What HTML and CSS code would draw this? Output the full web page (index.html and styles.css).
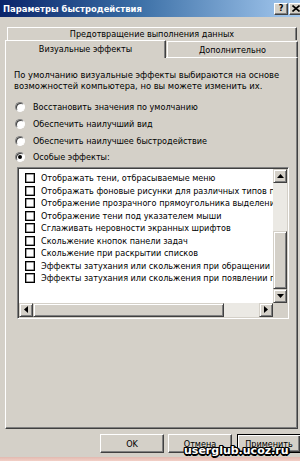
FILE: index.html
```html
<!DOCTYPE html>
<html lang="ru">
<head>
<meta charset="utf-8">
<title>Параметры быстродействия</title>
<link rel="stylesheet" href="styles.css">
</head>
<body>
<div class="window">
  <div class="titlebar">
    <span class="title">Параметры быстродействия</span>
    <div class="tb-btns">
      <span class="tb-btn">?</span>
      <span class="tb-btn x">
        <svg width="8" height="7" viewBox="0 0 8 7"><path d="M0.5 0.5 L7.5 6.5 M7.5 0.5 L0.5 6.5" stroke="#000" stroke-width="1.6"/></svg>
      </span>
    </div>
  </div>

  <div class="tabs">
    <div class="tabrow back">
      <div class="tab wide">Предотвращение выполнения данных</div>
    </div>
    <div class="tabrow front">
      <div class="tab sel">Визуальные эффекты</div>
      <div class="tab other">Дополнительно</div>
    </div>
  </div>

  <div class="panel">
    <p class="desc">По умолчанию визуальные эффекты выбираются на основе<br>возможностей компьютера, но вы можете изменить их.</p>
    <div class="radios">
      <div class="radio-row"><span class="radio"></span><span>Восстановить значения по умолчанию</span></div>
      <div class="radio-row"><span class="radio"></span><span>Обеспечить наилучший вид</span></div>
      <div class="radio-row"><span class="radio"></span><span>Обеспечить наилучшее быстродействие</span></div>
      <div class="radio-row"><span class="radio on"></span><span>Особые эффекты:</span></div>
    </div>
    <div class="listbox">
      <div class="list-main">
        <div class="items">
          <div class="item"><span class="cb"></span><span>Отображать тени, отбрасываемые меню</span></div>
          <div class="item"><span class="cb"></span><span>Отображать фоновые рисунки для различных типов папок</span></div>
          <div class="item"><span class="cb"></span><span>Отображение прозрачного прямоугольника выделения</span></div>
          <div class="item"><span class="cb"></span><span>Отображение тени под указателем мыши</span></div>
          <div class="item"><span class="cb"></span><span>Сглаживать неровности экранных шрифтов</span></div>
          <div class="item"><span class="cb"></span><span>Скольжение кнопок панели задач</span></div>
          <div class="item"><span class="cb"></span><span>Скольжение при раскрытии списков</span></div>
          <div class="item"><span class="cb"></span><span>Эффекты затухания или скольжения при обращении к меню</span></div>
          <div class="item"><span class="cb"></span><span>Эффекты затухания или скольжения при появлении подсказок</span></div>
        </div>
        <div class="vscroll">
          <span class="sbtn"><svg width="7" height="4" viewBox="0 0 7 4"><path d="M3.5 0 L7 4 L0 4 Z" fill="#000"/></svg></span>
          <span class="track vtrack"></span>
          <span class="thumb vthumb"></span>
          <span class="sbtn"><svg width="7" height="4" viewBox="0 0 7 4"><path d="M0 0 L7 0 L3.5 4 Z" fill="#000"/></svg></span>
        </div>
      </div>
      <div class="hscroll">
        <span class="sbtn"><svg width="4" height="7" viewBox="0 0 4 7"><path d="M0 3.5 L4 0 L4 7 Z" fill="#000"/></svg></span>
        <span class="thumb hthumb"></span>
        <span class="track htrack"></span>
        <span class="sbtn"><svg width="4" height="7" viewBox="0 0 4 7"><path d="M0 0 L4 3.5 L0 7 Z" fill="#000"/></svg></span>
        <span class="corner"></span>
      </div>
    </div>
  </div>

  <div class="buttons">
    <span class="btn">OK</span>
    <span class="btn">Отмена</span>
    <span class="btn def">Применить</span>
  </div>
  <div class="bottom-edge"></div>
  <div class="watermark">userglub.ucoz.ru</div>
</div>
</body>
</html>
```

FILE: styles.css
```css
* { box-sizing: border-box; }
html, body {
  margin: 0;
  padding: 0;
  width: 300px;
  height: 461px;
  overflow: hidden;
  background: #d4d0c8;
}
.window {
  position: relative;
  width: 300px;
  height: 461px;
  overflow: hidden;
  font-family: "DejaVu Sans Condensed", "DejaVu Sans", sans-serif;
  font-size: 9px;
  color: #000;
  background: #d4d0c8;
}
.titlebar {
  height: 17px;
  display: flex;
  align-items: center;
  padding-left: 3px;
  background: linear-gradient(to right, #0a246a 0%, #3a6ea5 45%, #a6caf0 100%);
}
.title {
  color: #fff;
  font-weight: bold;
  font-size: 9.4px;
  flex: 1;
  white-space: nowrap;
}
.tb-btns {
  display: flex;
  gap: 1px;
  margin-right: -3px;
}
.tb-btn {
  width: 14px;
  height: 12px;
  display: flex;
  align-items: center;
  justify-content: center;
  background: #d4d0c8;
  border: 1px solid;
  border-color: #fff #404040 #404040 #fff;
  box-shadow: inset -1px -1px #808080;
  font-weight: bold;
  font-size: 9px;
  line-height: 1;
}
.tabs {
  margin-top: 10px;
}
.tabrow {
  display: flex;
}
.tabrow.back {
  padding-left: 7px;
  height: 13px;
}
.tab {
  display: flex;
  align-items: center;
  justify-content: center;
  white-space: nowrap;
  background: #d4d0c8;
  border-top: 1px solid #fff;
  border-left: 1px solid #fff;
  border-right: 1px solid #404040;
  box-shadow: inset -1px 0 #808080;
}
.tab.wide {
  width: 290px;
  height: 13px;
}
.tabrow.front {
  height: 17px;
  padding-left: 5px;
  align-items: flex-end;
}
.tab.sel {
  width: 161px;
  height: 18px;
  margin-bottom: -1px;
  padding-bottom: 1px;
}
.tab.other {
  width: 131px;
  height: 16px;
  margin-left: 1px;
}
.panel {
  width: 293px;
  height: 372px;
  margin-left: 5px;
  border-top: 1px solid #fff;
  border-left: 1px solid #fff;
  border-right: 1px solid #404040;
  border-bottom: 1px solid #404040;
  box-shadow: inset -1px -1px #808080;
  padding-top: 11px;
}
.desc {
  margin: 0 0 0 8px;
  line-height: 11px;
  white-space: nowrap;
  font-size: 9.3px;
}
.radios {
  margin-top: 8px;
  margin-left: 9px;
}
.radio-row {
  height: 16.7px;
  display: flex;
  align-items: center;
  gap: 8px;
  white-space: nowrap;
}
.radio {
  width: 10px;
  height: 10px;
  border-radius: 50%;
  background: #fff;
  border: 1px solid;
  border-color: #808080 #fff #fff #808080;
  box-shadow: inset 1px 1px #404040;
  display: flex;
  align-items: center;
  justify-content: center;
  flex: none;
}
.radio.on::after {
  content: "";
  width: 4px;
  height: 4px;
  border-radius: 50%;
  background: #000;
}
.listbox {
  width: 272px;
  height: 152px;
  margin-left: 11px;
  margin-top: 1px;
  border: 1px solid;
  border-color: #808080 #fff #fff #808080;
  box-shadow: inset 1px 1px #404040, inset -1px -1px #d4d0c8;
  padding: 1px;
  display: flex;
  flex-direction: column;
  background: #fff;
}
.list-main {
  display: flex;
  height: 134px;
}
.items {
  flex: 1;
  overflow: hidden;
  padding-top: 3px;
  background: #fff;
}
.item {
  height: 12.5px;
  display: flex;
  align-items: center;
  gap: 6px;
  padding-left: 6px;
  white-space: nowrap;
}
.cb {
  width: 10px;
  height: 10px;
  flex: none;
  border: 1px solid #000;
  box-shadow: inset 0 0 0 0.5px #444;
  background: #fff;
}
.vscroll {
  width: 14px;
  display: flex;
  flex-direction: column;
}
.sbtn {
  width: 14px;
  height: 14px;
  flex: none;
  display: flex;
  align-items: center;
  justify-content: center;
  background: #d4d0c8;
  border: 1px solid;
  border-color: #d4d0c8 #404040 #404040 #d4d0c8;
  box-shadow: inset 1px 1px #fff, inset -1px -1px #808080;
}
.track {
  background: #ebe9e4;
}
.vtrack { height: 48px; }
.thumb {
  background: #d4d0c8;
  border: 1px solid;
  border-color: #d4d0c8 #404040 #404040 #d4d0c8;
  box-shadow: inset 1px 1px #fff, inset -1px -1px #808080;
}
.vthumb { flex: 1; }
.hscroll {
  display: flex;
  height: 14px;
}
.hthumb { width: 191px; }
.htrack { flex: 1; }
.corner {
  width: 14px;
  background: #d4d0c8;
}
.buttons {
  display: flex;
  gap: 4px;
  padding-left: 100px;
  margin-top: 5px;
}
.btn {
  width: 64px;
  height: 19px;
  flex: none;
  display: flex;
  align-items: center;
  justify-content: center;
  background: #d4d0c8;
  border: 1px solid;
  border-color: #fff #404040 #404040 #fff;
  box-shadow: inset -1px -1px #808080;
}
.btn.def {
  margin-left: 1px;
  border-color: #000;
  box-shadow: inset 1px 1px #fff, inset -1px -1px #404040, inset -2px -2px #808080;
}
.bottom-edge {
  position: absolute;
  left: 0;
  right: 0;
  bottom: 0;
  height: 4px;
  background: linear-gradient(to bottom, #e2b9b0, #f2cfc6);
}
.watermark {
  position: absolute;
  left: 184px;
  top: 444px;
  font-family: "DejaVu Sans", sans-serif;
  font-weight: bold;
  font-size: 11px;
  line-height: 14px;
  color: #fff;
  text-shadow: 1px 0 #000, -1px 0 #000, 0 1px #000, 0 -1px #000, 1px 1px #000, -1px -1px #000, 1px -1px #000, -1px 1px #000, 2px 0 #000, 0 2px #000;
}
```
